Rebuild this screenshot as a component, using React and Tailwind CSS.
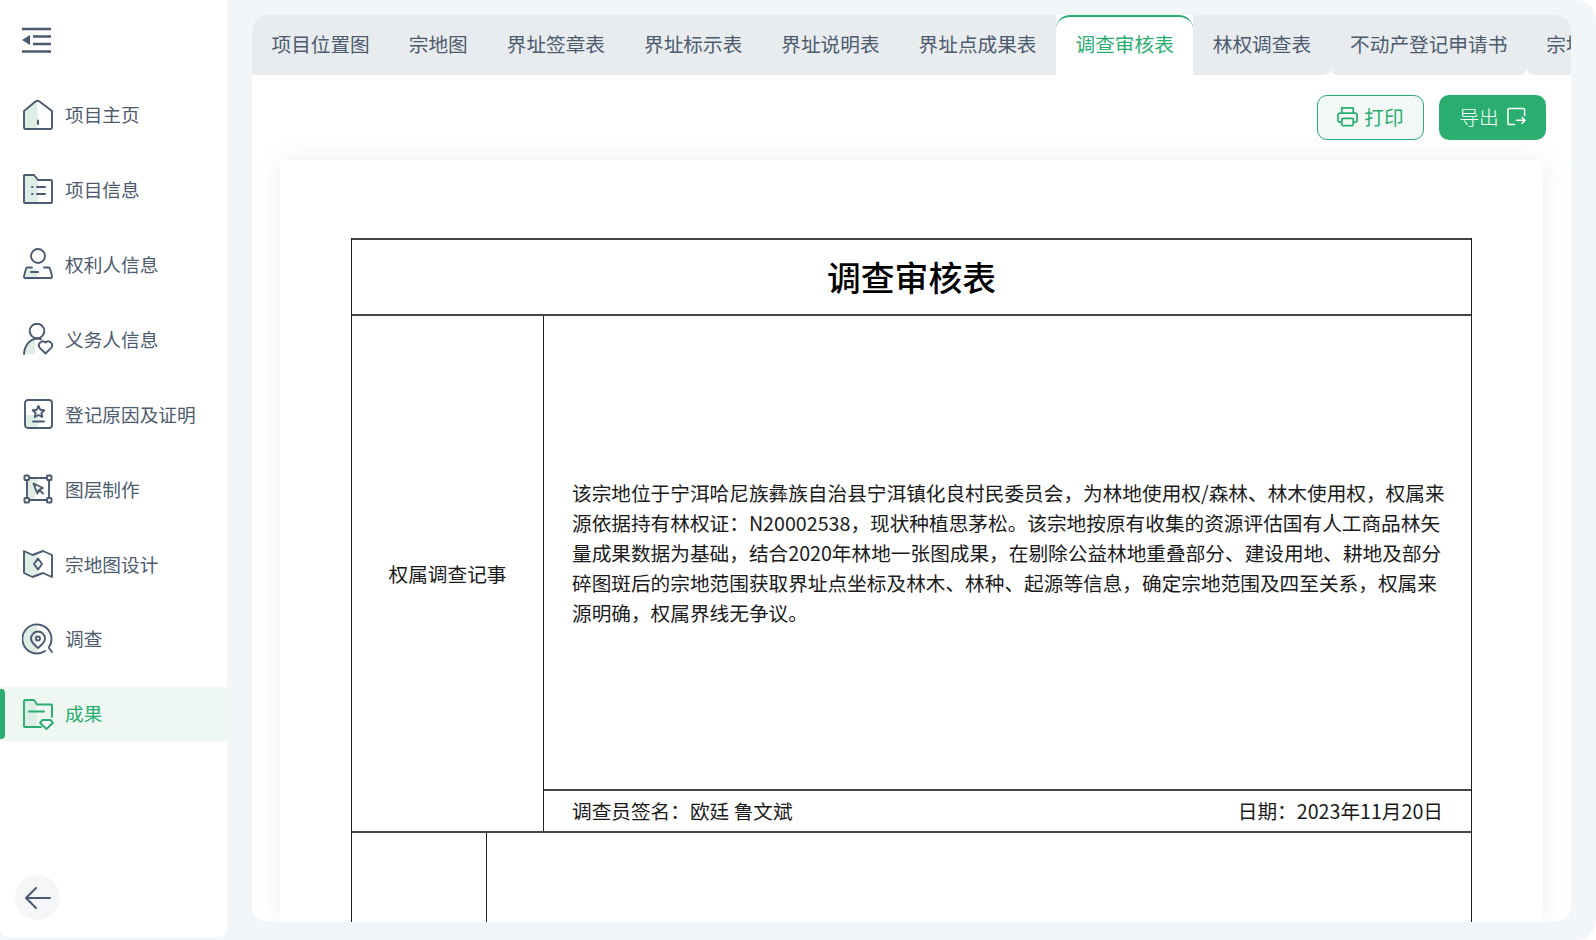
import React from "react";

const S = "#4a5a70";
const F = "#deeee6";
const G = "#29ae6f";

function Ico({ children, stroke = S }) {
  return (
    <svg width="32" height="32" viewBox="0 0 32 32" fill="none" stroke={stroke} strokeWidth="1.9" strokeLinejoin="round" strokeLinecap="round" className="shrink-0">
      {children}
    </svg>
  );
}

const icons = [
  <Ico key="a">
    <path d="M2 12 L15.5 2 V30 H4 a2 2 0 0 1 -2 -2 Z" fill={F} stroke="none" />
    <path d="M2 12 L13.5 2.6 a3 3 0 0 1 4 0 L30 12 V28 a2 2 0 0 1 -2 2 H4 a2 2 0 0 1 -2 -2 Z" />
    <path d="M16 21.5 V25" strokeWidth="2" />
  </Ico>,
  <Ico key="b">
    <path d="M2 2 H12 L16 7 V30 H2 Z" fill={F} stroke="none" />
    <path d="M2.5 2 H12 L16 7 H29 a1 1 0 0 1 1 1 V29 a1 1 0 0 1 -1 1 H3 a1 1 0 0 1 -1 -1 V2.5 Z" />
    <path d="M10 14 H10.6 M10 21 H10.6 M15 14 H23 M15 21 H23" />
  </Ico>,
  <Ico key="c">
    <path d="M3 29 L5 21 H15 V30 H3 Z" fill={F} stroke="none" />
    <circle cx="16" cy="8" r="7" />
    <path d="M10 19.5 H5.5 a1.5 1.5 0 0 0 -1.5 1.2 L2 28 a1.5 1.5 0 0 0 1.5 2 H28.5 a1.5 1.5 0 0 0 1.5 -2 L28 20.7 a1.5 1.5 0 0 0 -1.5 -1.2 H22" />
    <path d="M9 24 H16" />
  </Ico>,
  <Ico key="d">
    <path d="M2 31 C3 24 7 18 13 16 V31 Z" fill={F} stroke="none" />
    <circle cx="15" cy="8" r="7.3" />
    <path d="M2 31 C2.5 22 8 16 15 15.5 C16.5 15.5 17.8 15.7 19 16.2" />
    <path d="M23.5 30.5 L17.8 24.8 a3.9 3.9 0 0 1 5.7 -5.3 a3.9 3.9 0 0 1 5.7 5.3 Z" />
  </Ico>,
  <Ico key="e">
    <path d="M3 17 H16 V30 H5 a2 2 0 0 1 -2 -2 Z" fill={F} stroke="none" />
    <rect x="3" y="2" width="27" height="28" rx="3" />
    <path d="M16.5 8 L18.3 11.8 L22.3 12.3 L19.4 15 L20.2 19 L16.5 17 L12.8 19 L13.6 15 L10.7 12.3 L14.7 11.8 Z" />
    <path d="M11 23.5 H22" />
  </Ico>,
  <Ico key="f">
    <path d="M5 5 H16 L12 27 H5 Z" fill={F} stroke="none" />
    <path d="M5 5 H27 V27 H5 Z" />
    <rect x="2.5" y="2.5" width="4.5" height="4.5" rx="0.8" fill="#fff" />
    <rect x="25" y="2.5" width="4.5" height="4.5" rx="0.8" fill="#fff" />
    <rect x="2.5" y="25" width="4.5" height="4.5" rx="0.8" fill="#fff" />
    <rect x="25" y="25" width="4.5" height="4.5" rx="0.8" fill="#fff" />
    <path d="M11.5 10.5 L21 15 L17 16.8 L15.3 20.5 Z M17.2 16.8 L21 20.5" />
  </Ico>,
  <Ico key="g">
    <path d="M2 3 L11 7 V28 L2 25 Z M11 7 L16 5 V27 L11 29 Z" fill={F} stroke="none" />
    <path d="M2 3 L10.5 7 L21 3 L30 7 V29 L21 25 L10.5 29 L2 25 Z" />
    <path d="M16 10.5 L20 16 L16 21.5 L12 16 Z" />
  </Ico>,
  <Ico key="h">
    <path d="M15 1.5 A14.5 14.5 0 0 0 15 30.5 Z" fill={F} stroke="none" />
    <path d="M23 28 A14.5 14.5 0 1 1 27 24" />
    <path d="M27 25 L30 29" />
    <path d="M16 8.5 a7 7 0 0 1 7 7 c0 4 -4 7 -7 9.5 c-3 -2.5 -7 -5.5 -7 -9.5 a7 7 0 0 1 7 -7 Z" />
    <circle cx="16" cy="15.5" r="2" />
  </Ico>,
  <Ico key="i" stroke={G}>
    <path d="M2 2 H12 L15 6.5 V29 H2 Z" fill={F} stroke="none" />
    <path d="M19 29 H3 a1 1 0 0 1 -1 -1 V3 a1 1 0 0 1 1 -1 H12 L15 6.5 H29 a1 1 0 0 1 1 1 V19" />
    <path d="M7 13.5 H22" />
    <path d="M20.5 22 H28.5 L31 24.8 L24.5 31 L18 24.8 Z" fill="#fff" />
  </Ico>,
];

const nav = ["项目主页", "项目信息", "权利人信息", "义务人信息", "登记原因及证明", "图层制作", "宗地图设计", "调查", "成果"];
const tabs = [
  ["项目位置图", ""],
  ["宗地图", ""],
  ["界址签章表", ""],
  ["界址标示表", ""],
  ["界址说明表", ""],
  ["界址点成果表", ""],
  ["调查审核表", "active"],
  ["林权调查表", "rounded-br-[7px]"],
  ["不动产登记申请书", "rounded-b-[7px]"],
  ["宗地图审核表", "rounded-bl-[7px]"],
];

export default function App() {
  return (
    <div className="flex h-[940px] w-[1596px] overflow-hidden bg-white font-['Noto_Sans_CJK_SC','Noto_Sans',sans-serif]">
      <aside className="w-[227px] shrink-0 bg-[#f3f6f8]">
        <div className="flex h-[937px] flex-col rounded-b-lg bg-white pt-[27px]">
          <svg width="30" height="26" viewBox="0 0 30 26" fill="none" stroke={S} strokeWidth="2.4" className="ml-[22px] shrink-0">
            <path d="M0 2 H29 M11 9.5 H29 M11 17 H29 M0 24.5 H29" />
            <path d="M0 13 L8 8 V18 Z" fill={S} stroke="none" />
          </svg>
          <nav className="mt-[34.5px] flex flex-col gap-[20.9px]">
            {nav.map((n, i) => (
              <div
                key={n}
                className={
                  i === 8
                    ? "relative flex h-[54px] items-center gap-[11px] bg-[#eef7f2] pl-[22px] text-[18.67px] text-[#29ae6f]"
                    : "flex h-[54px] items-center gap-[11px] pl-[22px] text-[18.67px] text-[#4d5b6e]"
                }
              >
                {i === 8 && <div className="absolute left-0 top-[2px] h-[50px] w-[5px] rounded-r-[4px] bg-[#29ae6f]" />}
                {icons[i]}
                <span className="leading-none">{n}</span>
              </div>
            ))}
          </nav>
          <div className="ml-[15px] mt-auto mb-[17px] flex h-[45px] w-[45px] items-center justify-center rounded-full bg-[#f4f6f8]">
            <svg width="28" height="24" viewBox="0 0 28 24" fill="none" stroke={S} strokeWidth="2" strokeLinecap="round" strokeLinejoin="round">
              <path d="M26 12 H2 M12 2 L2 12 L12 22" />
            </svg>
          </div>
        </div>
      </aside>

      <main className="flex min-w-0 flex-1 rounded-r-[20px] bg-[#f3f6f8] pb-[18px] pl-[25px] pr-[25px] pt-[15px]">
        <div className="flex min-w-0 flex-1 flex-col overflow-hidden rounded-[16px] bg-white">
          <div className="flex h-[60px] shrink-0 overflow-hidden bg-white">
            {tabs.map(([t, k]) =>
              k === "active" ? (
                <div key={t} className="flex h-full shrink-0 items-center rounded-t-[14px] border-t-2 border-[#29ae6f] bg-white px-[19.5px] pb-[4px] text-[19.67px] text-[#29ae6f]">
                  {t}
                </div>
              ) : (
                <div key={t} className={`flex h-full shrink-0 items-center bg-[#e8ecef] px-[19.5px] pb-[3px] text-[19.67px] text-[#4d5b6e] ${k}`}>
                  {t}
                </div>
              )
            )}
            <div className="flex-1 bg-[#e8ecef]" />
          </div>

          <div className="flex shrink-0 justify-end gap-[15px] pr-[25px] pt-5">
            <button className="flex h-[45px] w-[107px] items-center justify-center gap-[6px] rounded-[10px] border border-[#29ae6f] bg-[#f1f8f5] pb-[2px] text-[19.67px] text-[#29ae6f]">
              <svg width="21" height="21" viewBox="0 0 22 22" fill="none" stroke={G} strokeWidth="1.8" strokeLinejoin="round">
                <path d="M5 7.5 V2 H17 V7.5" />
                <path d="M5 17 H3 a2 2 0 0 1 -2 -2 V9.5 a2 2 0 0 1 2 -2 H19 a2 2 0 0 1 2 2 V15 a2 2 0 0 1 -2 2 H17" />
                <rect x="5" y="13" width="12" height="7.5" rx="1" />
              </svg>
              <span>打印</span>
            </button>
            <button className="flex h-[45px] w-[107px] items-center justify-center gap-[8px] rounded-[10px] bg-[#29ae6f] pb-[2px] text-[19.67px] font-light text-white">
              <span>导出</span>
              <svg width="19" height="19" viewBox="0 0 20 20" fill="none" stroke="#fff" strokeWidth="1.6" strokeLinecap="round" strokeLinejoin="round">
                <path d="M8 18.5 H2.5 a1.5 1.5 0 0 1 -1.5 -1.5 V3 a1.5 1.5 0 0 1 1.5 -1.5 H17 a1.5 1.5 0 0 1 1.5 1.5 V9" />
                <path d="M10 14 H19 M16 11 L19 14 L16 17" />
              </svg>
            </button>
          </div>

          <div className="mx-7 mt-[20px] flex min-h-0 flex-1 flex-col bg-white px-[71px] pt-[78px] shadow-[0_0_24px_rgba(226,232,236,0.75)]">
            <div className="flex min-h-0 flex-1 flex-col overflow-hidden border-x border-[#222] text-[19.67px] text-[#1a1a1a]">
              <div className="flex h-[78px] shrink-0 items-center justify-center border-y-2 border-[#444] text-[33.8px] font-medium text-black">
                调查审核表
              </div>
              <div className="flex h-[515px] shrink-0">
                <div className="flex w-[192px] shrink-0 items-center justify-center border-r border-[#222]">权属调查记事</div>
                <div className="flex min-w-0 flex-1 flex-col">
                  <div className="flex flex-1 items-center pl-[28px] pr-[22px] leading-[30px]">
                    <p>
                      该宗地位于宁洱哈尼族彝族自治县宁洱镇化良村民委员会，为林地使用权/森林、林木使用权，权属来源依据持有林权证：N20002538，现状种植思茅松。该宗地按原有收集的资源评估国有人工商品林矢量成果数据为基础，结合2020年林地一张图成果，在剔除公益林地重叠部分、建设用地、耕地及部分碎图斑后的宗地范围获取界址点坐标及林木、林种、起源等信息，确定宗地范围及四至关系，权属来源明确，权属界线无争议。
                    </p>
                  </div>
                  <div className="flex h-[42px] shrink-0 items-center justify-between border-t-2 border-[#444] px-[28px]">
                    <span>调查员签名：欧廷 鲁文斌</span>
                    <span>日期：2023年11月20日</span>
                  </div>
                </div>
              </div>
              <div className="flex flex-1 border-t-2 border-[#444]">
                <div className="w-[135px] shrink-0 border-r border-[#222]" />
                <div className="flex-1" />
              </div>
            </div>
          </div>
        </div>
      </main>
    </div>
  );
}
